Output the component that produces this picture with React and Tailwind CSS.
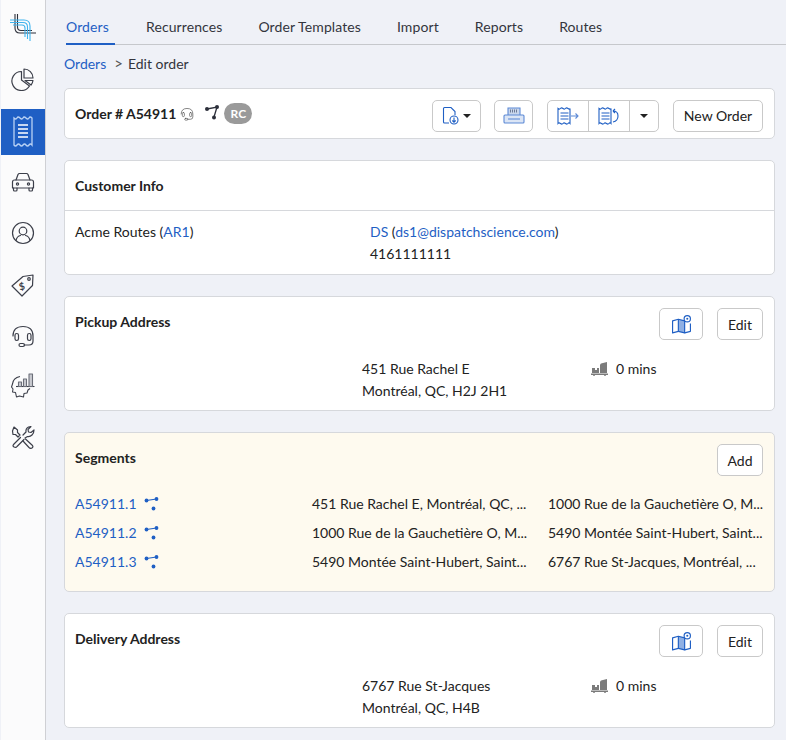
const TABS = ["Orders", "Recurrences", "Order Templates", "Import", "Reports", "Routes"];

const link = "text-[#1f5fc4]";
const btn = "h-[32px] flex items-center justify-center bg-white border border-[#c9c9c9] rounded-[5px]";

function Stroke({ size = 24, children, color = "#3c3f4a", sw = 1.2 }) {
  return (
    <svg width={size} height={size} viewBox="0 0 24 24" fill="none" stroke={color} strokeWidth={sw} strokeLinecap="round" strokeLinejoin="round">
      {children}
    </svg>
  );
}

function Logo() {
  return (
    <svg width="28" height="28" viewBox="0 0 28 28" fill="none" strokeWidth="1.100">
      <path d="M6 1v14q0 5 5 5h16M8.500 1v13q0 3.500 3.500 3.500h11" stroke="#2c2f3a" />
      <path d="M1 7h14q6 0 6 6v15M1 9.500h13q4.500 0 4.500 4.500v12M4 12h9q3 0 3 3v9" stroke="#3fb4ee" />
    </svg>
  );
}

function PieIcon() {
  return (
    <Stroke>
      <path d="M10.500 4.500a9.500 9.500 0 1 0 8 14.500l-8-6z" />
      <path d="M13 2a9 9 0 0 1 9 9h-9z" />
      <path d="M14 13.500h8a9 9 0 0 1-2 4.500z" />
    </Stroke>
  );
}

function ReceiptIcon() {
  return (
    <svg width="20" height="32" viewBox="0 0 20 32" fill="none" stroke="#b9d2f5" strokeWidth="1.300">
      <path d="M1 2q2 2 3 0t3 0 3 0 3 0 3 0 3 0v27q-1.500-2-3 0t-3 0-3 0-3 0-3 0-3 0z" />
      <path d="M5 9h10M5 13h10M5 17h10M5 21h10" stroke="#fff" />
    </svg>
  );
}

function CarIcon() {
  return (
    <Stroke>
      <path d="M5 10l2-5.500q.5-1 1.500-1h7q1 0 1.500 1l2 5.500" />
      <path d="M1.500 12q0-2 2-2h17q2 0 2 2v6h-21z" />
      <path d="M2.500 18v2q0 1 1 1h1.500q1 0 1-1v-2M18 18v2q0 1 1 1h1.500q1 0 1-1v-2" />
      <circle cx="6.500" cy="14" r="1.100" />
      <circle cx="17.500" cy="14" r="1.100" />
    </Stroke>
  );
}

function UserIcon() {
  return (
    <Stroke>
      <circle cx="12" cy="12" r="10.500" />
      <circle cx="12" cy="10" r="3.800" />
      <path d="M5 19.500q1-4.500 4.500-5M19 19.500q-1-4.500-4.500-5" />
    </Stroke>
  );
}

function TagIcon() {
  return (
    <svg width="24" height="24" viewBox="0 0 24 24" fill="none" stroke="#3c3f4a" strokeWidth="1.200" strokeLinejoin="round">
      <path d="M1 13L12 3.500l10-1.500-.5 10.500L11 23z" />
      <circle cx="18" cy="6" r="1.300" />
      <text x="8" y="17" fontSize="10" fontWeight="700" fill="#3c3f4a" stroke="none" fontFamily="Lato, sans-serif" transform="rotate(-12 11 14)">$</text>
    </svg>
  );
}

function HeadsetIcon({ size = 24, color = "#3c3f4a", sw = 1.2 }) {
  return (
    <Stroke size={size} color={color} sw={sw}>
      <path d="M2 12q0-9.500 10-9.500T22 12v5q0 4-4 4h-5" />
      <rect x="4" y="9.500" width="3.500" height="7" rx="1.700" />
      <rect x="16.500" y="9.500" width="3.500" height="7" rx="1.700" />
      <rect x="8" y="19.500" width="5.500" height="3" rx="1.500" />
    </Stroke>
  );
}

function HeadIcon() {
  return (
    <svg width="24" height="27" viewBox="0 0 24 27" fill="none" stroke="#3c3f4a" strokeWidth="1.100" strokeLinejoin="round">
      <path d="M9 3.500Q2 5 1.500 11L0.500 14l1.500 2-.5 3 3 .5 1 4.500 3-1 4 1 .5-3.500 3-.5 1-3 2-1.500" />
      <path d="M5 13.500h18.500" />
      <path d="M7.500 9h3v4.500h-3zM12.500 6h3v7.500h-3zM18 1h3.500v12.500H18z" stroke="#6b6e78" fill="#c9cad0" />
    </svg>
  );
}

function ToolsIcon() {
  return (
    <Stroke>
      <path d="M3 2l3.500 3v2.500L9 10l-2 2-2.500-2.500H2l-.5-3.500z" />
      <path d="M9.500 12.500L3 19q-2 2 0 3t3-.5l7-7" />
      <path d="M12 10l3-3q-.5-3.500 2.500-5l2.500-.5-3 3 .5 2.500 2.500.5 3-2.500q0 3-2 5t-4.500 1.500L14 13" />
      <path d="M14.500 14l7 6.500q1 1.500-.5 2.500t-3-.5L12 16" />
    </Stroke>
  );
}

function RouteIcon() {
  return (
    <svg width="14" height="15" viewBox="0 0 14 15" fill="none" stroke="#2c2f3a" strokeWidth="1.300">
      <path d="M2 4L12 2 9 12" />
      <circle cx="2" cy="4" r="2" fill="#2c2f3a" stroke="none" />
      <circle cx="12" cy="2" r="2" fill="#2c2f3a" stroke="none" />
      <circle cx="9" cy="12.500" r="2" fill="#2c2f3a" stroke="none" />
    </svg>
  );
}

function SegmentRouteIcon() {
  return (
    <svg width="15" height="15" viewBox="0 0 15 15" fill="none">
      <path d="M2.500 4.500L12.500 3" stroke="#1f5fc4" strokeWidth="1.200" />
      <circle cx="2.500" cy="4.500" r="1.900" fill="#1f5fc4" />
      <circle cx="12.500" cy="3" r="1.900" fill="#1f5fc4" />
      <circle cx="9.500" cy="12.500" r="1.900" fill="#1f5fc4" />
    </svg>
  );
}

function Caret() {
  return <span className="w-0 h-0 border-x-[4px] border-x-transparent border-t-[4px] border-t-[#222]" />;
}

function DocDownIcon() {
  return (
    <svg width="18" height="20" viewBox="0 0 18 20" fill="none" stroke="#1f5fc4" strokeWidth="1.100">
      <path d="M7 17H2.500q-1 0-1-1V2.500q0-1 1-1H9l4 4V9" />
      <circle cx="12" cy="14" r="4" />
      <path d="M12 11.500v4.500M10.300 14.500l1.700 1.700 1.700-1.700" />
    </svg>
  );
}

function PrinterIcon() {
  return (
    <svg width="22" height="20" viewBox="0 0 22 20" fill="none" stroke="#5d8ad6" strokeWidth="1.100">
      <path d="M5 9V2h12v7" fill="#c9d6ec" />
      <path d="M7 5h8" stroke="#6d7a95" strokeWidth="3" strokeDasharray="1 1" />
      <path d="M2 9h18q1 0 1 1v6q0 1-1 1H2q-1 0-1-1v-6q0-1 1-1z" fill="#dbe5f5" />
      <path d="M5 13h12" />
    </svg>
  );
}

function SlipIcon({ variant }) {
  return (
    <svg width="22" height="18" viewBox="0 0 22 18" fill="none" stroke="#1f5fc4" strokeWidth="1.100">
      <path d="M1 1.500q1.500 1.200 2.500 0t2.500 0 2.500 0 2.500 0 2 0v15q-1-1.200-2 0t-2.500 0-2.500 0-2.500 0-2.500 0z" />
      <path d="M3.500 6h8M3.500 9h8M3.500 12h8" />
      {variant === "out" ? (
        <path d="M14 9h7M18.500 6.500L21 9l-2.500 2.500" stroke="#5d8ad6" />
      ) : (
        <path d="M15 4q5 0 5 5t-5 6M15 4l2-2M15 4l2 2" />
      )}
    </svg>
  );
}

function MapIcon() {
  return (
    <svg width="21" height="21" viewBox="0 0 20 20" fill="none" stroke="#1f5fc4" strokeWidth="1.100" strokeLinejoin="round">
      <path d="M7 5L13 6.500V18L7 16.500z" fill="#8fb0e4" />
      <path d="M7 5L1.500 6.500V18L7 16.500" />
      <path d="M13 18l5.500-1.500V9" />
      <circle cx="15.500" cy="4.500" r="3" fill="#fff" />
      <circle cx="15.500" cy="4.500" r="1" fill="#1f5fc4" stroke="none" />
    </svg>
  );
}

function TruckIcon() {
  return (
    <svg width="18" height="14" viewBox="0 0 18 14" fill="#7b7b7b">
      <path d="M10 1.500l6-1.500v11H9V2.500z" />
      <path d="M1 6h3v2h2V6h2v5H1z" />
      <path d="M0 11.500h17V13H0z" />
      <circle cx="3" cy="13" r="1" />
      <circle cx="14" cy="13" r="1" />
    </svg>
  );
}

function Card({ children, className = "" }) {
  return <div className={`border border-[#d6d8dc] rounded-[5px] ${className}`}>{children}</div>;
}

function AddressCard({ title, lines, className }) {
  return (
    <Card className={`bg-white h-[115px] pl-[10px] pr-[11px] pt-[11px] ${className}`}>
      <div className="flex items-start justify-between">
        <h3 className="font-bold text-[14px] leading-[28px] text-[#222]">{title}</h3>
        <div className="flex gap-[14px]">
          <button className={`${btn} w-[44px]`}><MapIcon /></button>
          <button className={`${btn} w-[46px] text-[14px] text-[#222]`}>Edit</button>
        </div>
      </div>
      <div className="flex mt-[18px] leading-[22px]">
        <div className="w-[287px] shrink-0" />
        <div className="w-[229px] shrink-0">
          {lines.map((l) => <div key={l}>{l}</div>)}
        </div>
        <div className="flex items-center gap-[7px] h-[22px]">
          <TruckIcon />
          <span>0 mins</span>
        </div>
      </div>
    </Card>
  );
}

const SEGMENTS = [
  ["A54911.1", "451 Rue Rachel E, Montréal, QC, ...", "1000 Rue de la Gauchetière O, M..."],
  ["A54911.2", "1000 Rue de la Gauchetière O, M...", "5490 Montée Saint-Hubert, Saint..."],
  ["A54911.3", "5490 Montée Saint-Hubert, Saint...", "6767 Rue St-Jacques, Montréal, ..."],
];

export default function App() {
  return (
    <div className="flex h-[740px] w-[786px] overflow-hidden bg-[#eff1f7] text-[14px] text-[#222] font-['Lato',sans-serif]">
      <aside className="w-[45px] shrink-0 ml-px bg-[#fbfbfc] border-r border-[#cfd0d4] flex flex-col items-center">
        <div className="h-[54px] w-full flex items-center justify-center"><Logo /></div>
        <div className="h-[55px] w-full flex items-center justify-center pb-[5px]"><PieIcon /></div>
        <div className="h-[46px] w-full flex items-center justify-center bg-[#1f5fc4]"><ReceiptIcon /></div>
        <div className="h-[52px] w-full flex items-center justify-center pt-[2px]"><CarIcon /></div>
        <div className="h-[52px] w-full flex items-center justify-center"><UserIcon /></div>
        <div className="h-[51px] w-full flex items-center justify-center"><TagIcon /></div>
        <div className="h-[51px] w-full flex items-center justify-center"><HeadsetIcon /></div>
        <div className="h-[50px] w-full flex items-center justify-center"><HeadIcon /></div>
        <div className="h-[51px] w-full flex items-center justify-center"><ToolsIcon /></div>
      </aside>

      <main className="flex-1 min-w-0 pl-[18px] pr-[11px]">
        <nav className="flex h-[45px] pt-[13px] ml-[2px] -mr-[11px] border-b border-[#c6c8cc] tracking-[0.1px]">
          {TABS.map((t, i) => (
            <div
              key={t}
              className={
                i === 0
                  ? "h-[32px] w-[49px] mr-[31px] leading-[28px] text-[#1f5fc4] border-b-2 border-[#1f5fc4]"
                  : "h-[31px] mr-[36px] leading-[28px] text-[#33353d]"
              }
            >
              {t}
            </div>
          ))}
        </nav>

        <div className="flex items-center h-[22px] mt-[8px] mb-[13px] -translate-y-[1px]">
          <span className={link}>Orders</span>
          <span className="ml-[8px] mr-[5px] text-[#555] text-[15px]">&gt;</span>
          <span className="text-[#33353d]">Edit order</span>
        </div>

        <Card className="bg-white h-[51px] pl-[10px] pr-[11px] flex items-center">
          <span className="font-bold text-[14px]">Order # A54911</span>
          <span className="ml-[4px]"><HeadsetIcon size={14} color="#555" sw={1.2} /></span>
          <span className="ml-[11px] mb-[3px]"><RouteIcon /></span>
          <span className="ml-[5px] w-[28px] h-[21px] rounded-full bg-[#9a9a9a] text-white font-bold text-[12px] flex items-center justify-center">RC</span>
          <div className="ml-auto flex items-center mt-[4px]">
            <button className={`${btn} w-[49px] gap-[3px] pr-[1px]`}><DocDownIcon /><Caret /></button>
            <button className={`${btn} w-[39px] ml-[13px]`}><PrinterIcon /></button>
            <div className={`${btn} ml-[14px] w-[112px] !justify-start`}>
              <span className="w-[41px] flex justify-center border-r border-[#c9c9c9] h-full items-center"><SlipIcon variant="out" /></span>
              <span className="w-[41px] flex justify-center border-r border-[#c9c9c9] h-full items-center"><SlipIcon variant="back" /></span>
              <span className="flex-1 flex justify-center"><Caret /></span>
            </div>
            <button className={`${btn} w-[90px] ml-[14px] text-[14px]`}>New Order</button>
          </div>
        </Card>

        <Card className="bg-white h-[115px] mt-[21px]">
          <div className="h-[50px] px-[10px] flex items-center border-b border-[#d6d8dc]">
            <h3 className="font-bold text-[14px]">Customer Info</h3>
          </div>
          <div className="flex px-[10px] pt-[10px] leading-[22px]">
            <div className="w-[295px] shrink-0">
              Acme Routes (<span className={link}>AR1</span>)
            </div>
            <div>
              <div><span className={link}>DS</span> (<span className={link}>ds1@dispatchscience.com</span>)</div>
              <div>4161111111</div>
            </div>
          </div>
        </Card>

        <AddressCard className="mt-[21px]" title="Pickup Address" lines={["451 Rue Rachel E", "Montréal, QC, H2J 2H1"]} />

        <Card className="bg-[#fefaef] h-[160px] mt-[21px] pl-[10px] pr-[11px] pt-[11px]">
          <div className="flex items-start justify-between">
            <h3 className="font-bold text-[14px] leading-[28px]">Segments</h3>
            <button className={`${btn} w-[46px] text-[14px]`}>Add</button>
          </div>
          <div className="mt-[13px]">
            {SEGMENTS.map(([id, from, to]) => (
              <div key={id} className="flex items-center h-[29px]">
                <div className="w-[237px] shrink-0 flex items-center gap-[7px]">
                  <span className={link}>{id}</span>
                  <SegmentRouteIcon />
                </div>
                <div className="w-[236px] shrink-0 whitespace-nowrap">{from}</div>
                <div className="whitespace-nowrap">{to}</div>
              </div>
            ))}
          </div>
        </Card>

        <AddressCard className="mt-[21px]" title="Delivery Address" lines={["6767 Rue St-Jacques", "Montréal, QC, H4B"]} />
      </main>
    </div>
  );
}
